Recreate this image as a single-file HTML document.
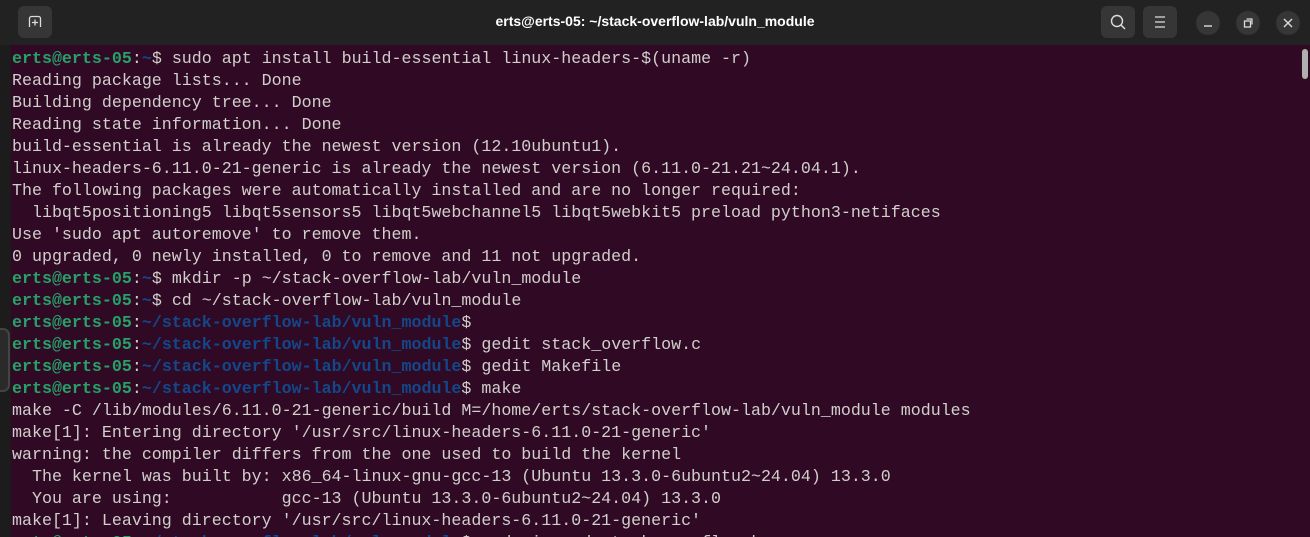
<!DOCTYPE html>
<html><head><meta charset="utf-8"><style>
html,body{margin:0;padding:0;width:1310px;height:537px;overflow:hidden;background:#1e1e1e;}
#hdr{position:absolute;left:0;top:0;width:1310px;height:45px;background:#222222;}
#title{position:absolute;left:0;right:0;top:13px;text-align:center;color:#ffffff;font:bold 14px "Liberation Sans",sans-serif;}
.btn{position:absolute;top:6px;width:34px;height:32px;background:#363636;border-radius:6px;}
.cbtn{position:absolute;top:11px;width:24px;height:24px;background:#363636;border-radius:50%;}
#left{position:absolute;left:0;top:45px;width:11px;height:492px;background:#1c1c1c;overflow:hidden;}
#lthumb{position:absolute;left:-8px;top:283px;width:14px;height:60px;border:2px solid #444;border-radius:7px;background:#2a2a2a;}
#term{position:absolute;left:11px;top:45px;width:1299px;height:492px;background:#300a24;overflow:hidden;}
pre{margin:0;position:absolute;left:1px;top:3px;font-family:"Liberation Mono",monospace;font-size:16.65px;line-height:22px;color:#d0cfcc;}
.g{color:#26a269;font-weight:bold;}
.b{color:#12488b;font-weight:bold;}
#sb{position:absolute;left:1291px;top:4px;width:6px;height:30px;background:#b0aeae;border-radius:3px;}
</style></head><body>
<div id="hdr">
 <div class="btn" style="left:18px;"><svg width="34" height="32"><path d="M11.5 21 V12.5 a2 2 0 0 1 2-2 H20.5 a2 2 0 0 1 2 2 V21" fill="none" stroke="#ddd" stroke-width="1.3"/><path d="M17 13.5v6M14 16.5h6" stroke="#ddd" stroke-width="1.3"/></svg></div>
 <div id="title">erts@erts-05: ~/stack-overflow-lab/vuln_module</div>
 <div class="btn" style="left:1101px;"><svg width="34" height="32"><circle cx="16" cy="15" r="5.5" fill="none" stroke="#ddd" stroke-width="1.4"/><path d="M20 19l4 4" stroke="#ddd" stroke-width="1.5"/></svg></div>
 <div class="btn" style="left:1143px;"><svg width="34" height="32"><path d="M12 11h10M12 16h10M12 21h10" stroke="#ddd" stroke-width="1.3"/></svg></div>
 <div class="cbtn" style="left:1196px;"><svg width="24" height="24"><path d="M8 15h8" stroke="#ddd" stroke-width="1.4"/></svg></div>
 <div class="cbtn" style="left:1236px;"><svg width="24" height="24"><rect x="8.5" y="10" width="6" height="6" fill="none" stroke="#ddd" stroke-width="1.3"/><path d="M10.5 8h5.5v5.5" fill="none" stroke="#ddd" stroke-width="1.2"/></svg></div>
 <div class="cbtn" style="left:1276px;"><svg width="24" height="24"><path d="M8 8l8 8M16 8l-8 8" stroke="#ddd" stroke-width="1.4"/></svg></div>
</div>
<div id="left"><div id="lthumb"></div></div>
<div id="term"><div id="sb"></div>
<pre><span class="g">erts@erts-05</span>:<span class="b">~</span>$ sudo apt install build-essential linux-headers-$(uname -r)
Reading package lists... Done
Building dependency tree... Done
Reading state information... Done
build-essential is already the newest version (12.10ubuntu1).
linux-headers-6.11.0-21-generic is already the newest version (6.11.0-21.21~24.04.1).
The following packages were automatically installed and are no longer required:
  libqt5positioning5 libqt5sensors5 libqt5webchannel5 libqt5webkit5 preload python3-netifaces
Use 'sudo apt autoremove' to remove them.
0 upgraded, 0 newly installed, 0 to remove and 11 not upgraded.
<span class="g">erts@erts-05</span>:<span class="b">~</span>$ mkdir -p ~/stack-overflow-lab/vuln_module
<span class="g">erts@erts-05</span>:<span class="b">~</span>$ cd ~/stack-overflow-lab/vuln_module
<span class="g">erts@erts-05</span>:<span class="b">~/stack-overflow-lab/vuln_module</span>$
<span class="g">erts@erts-05</span>:<span class="b">~/stack-overflow-lab/vuln_module</span>$ gedit stack_overflow.c
<span class="g">erts@erts-05</span>:<span class="b">~/stack-overflow-lab/vuln_module</span>$ gedit Makefile
<span class="g">erts@erts-05</span>:<span class="b">~/stack-overflow-lab/vuln_module</span>$ make
make -C /lib/modules/6.11.0-21-generic/build M=/home/erts/stack-overflow-lab/vuln_module modules
make[1]: Entering directory '/usr/src/linux-headers-6.11.0-21-generic'
warning: the compiler differs from the one used to build the kernel
  The kernel was built by: x86_64-linux-gnu-gcc-13 (Ubuntu 13.3.0-6ubuntu2~24.04) 13.3.0
  You are using:           gcc-13 (Ubuntu 13.3.0-6ubuntu2~24.04) 13.3.0
make[1]: Leaving directory '/usr/src/linux-headers-6.11.0-21-generic'
<span class="g">erts@erts-05</span>:<span class="b">~/stack-overflow-lab/vuln_module</span>$ sudo insmod stack_overflow.ko
</pre></div>
</body></html>
